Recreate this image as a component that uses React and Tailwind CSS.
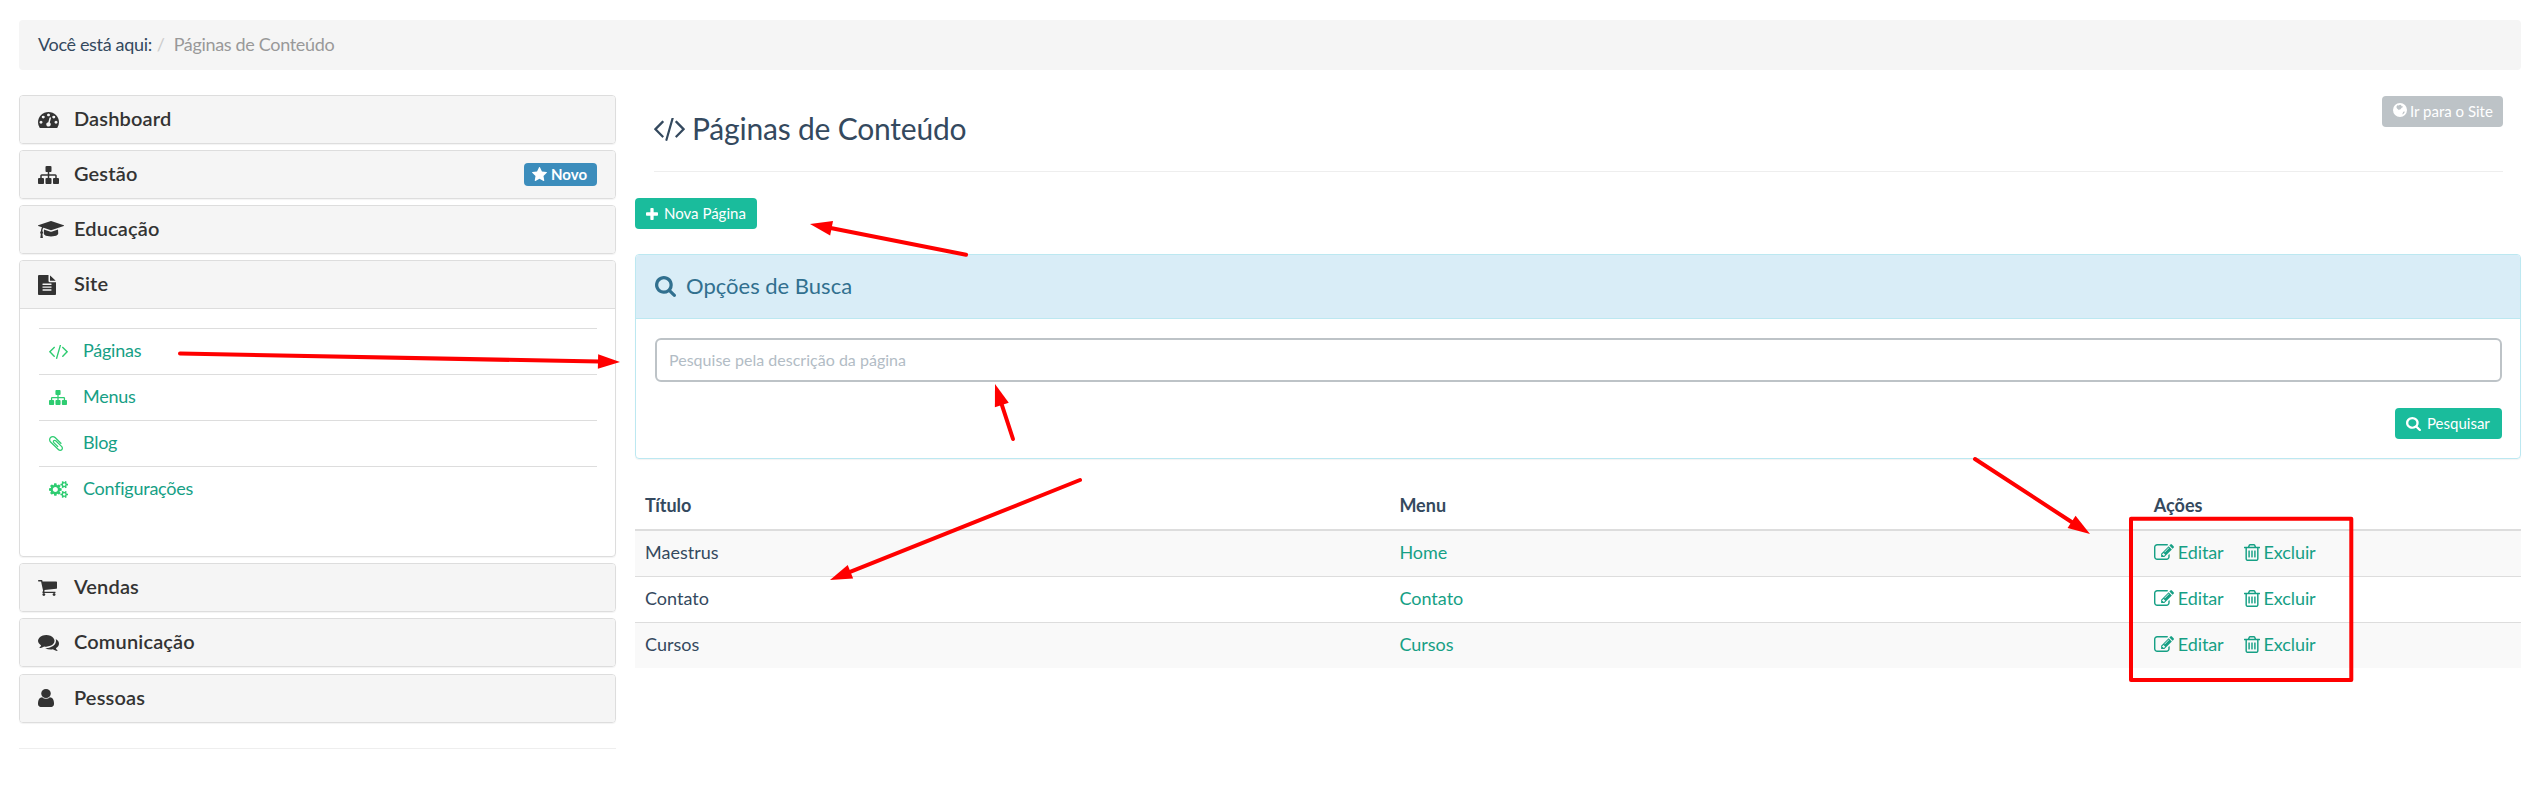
const P = {
  search: ["64 128 1664 1664", "M1216 832q0-185-131.5-316.5t-316.5-131.5-316.5 131.5-131.5 316.5 131.5 316.5 316.5 131.5 316.5-131.5 131.5-316.5zm512 832q0 52-38 90t-90 38q-54 0-90-38l-343-342q-179 124-399 124-143 0-273.5-55.5t-225-150-150-225-55.5-273.5 55.5-273.5 150-225 225-150 273.5-55.5 273.5 55.5 225 150 150 225 55.5 273.5q0 220-124 399l343 343q37 37 37 90z"],
  plus: ["192 128 1408 1408", "M1600 736v192q0 40-28 68t-68 28h-416v416q0 40-28 68t-68 28h-192q-40 0-68-28t-28-68v-416h-416q-40 0-68-28t-28-68v-192q0-40 28-68t68-28h416v-416q0-40 28-68t68-28h192q40 0 68 28t28 68v416h416q40 0 68 28t28 68z"],
  code: ["-19 310 1830 1340", "M553 1399l-50 50q-10 10-23 10t-23-10l-466-466q-10-10-10-23t10-23l466-466q10-10 23-10t23 10l50 50q10 10 10 23t-10 23l-393 393 393 393q10 10 10 23t-10 23zm591-1067l-373 1291q-4 13-15.5 19.5t-23.5 2.5l-62-17q-13-4-19.5-15.5t-2.5-24.5l373-1291q4-13 15.5-19.5t23.5-2.5l62 17q13 4 19.5 15.5t2.5 24.5zm657 651l-466 466q-10 10-23 10t-23-10l-50-50q-10-10-10-23t10-23l393-393-393-393q-10-10-10-23t10-23l50-50q10-10 23-10t23 10l466 466q10 10 10 23t-10 23z"],
  edit: ["0 128 1792 1408", "M888 1184l116-116-152-152-116 116v56h96v96h56zm440-720q-16-16-33 1l-350 350q-17 17-1 33t33-1l350-350q17-17 1-33zm80 594v190q0 119-84.5 203.5t-203.5 84.5h-832q-119 0-203.5-84.5t-84.5-203.5v-832q0-119 84.5-203.5t203.5-84.5h832q63 0 117 25 15 7 18 23 3 17-9 29l-49 49q-14 14-32 8-23-6-45-6h-832q-66 0-113 47t-47 113v832q0 66 47 113t113 47h832q66 0 113-47t47-113v-126q0-13 9-22l64-64q15-15 35-7t20 29zm-96-738l288 288-672 672h-288v-288zm444 132l-92 92-288-288 92-92q28-28 68-28t68 28l152 152q28 28 28 68t-28 68z"],
  trash: ["192 128 1408 1536", "M704 736v576q0 14-9 23t-23 9h-64q-14 0-23-9t-9-23v-576q0-14 9-23t23-9h64q14 0 23 9t9 23zm256 0v576q0 14-9 23t-23 9h-64q-14 0-23-9t-9-23v-576q0-14 9-23t23-9h64q14 0 23 9t9 23zm256 0v576q0 14-9 23t-23 9h-64q-14 0-23-9t-9-23v-576q0-14 9-23t23-9h64q14 0 23 9t9 23zm128 724v-948h-896v948q0 22 7 40.5t14.5 27 10.5 8.5h832q3 0 10.5-8.5t14.5-27 7-40.5zm-672-1076h448l-48-117q-7-9-17-11h-317q-10 2-17 11zm928 32v64q0 14-9 23t-23 9h-96v948q0 83-47 143.5t-113 60.5h-832q-66 0-113-58.5t-47-141.5v-952h-96q-14 0-23-9t-9-23v-64q0-14 9-23t23-9h309l70-167q15-37 54-63t79-26h320q40 0 79 26t54 63l70 167h309q14 0 23 9t9 23z"],
  sitemap: ["0 128 1792 1536", "M1792 1248v320q0 40-28 68t-68 28h-320q-40 0-68-28t-28-68v-320q0-40 28-68t68-28h96v-192h-512v192h96q40 0 68 28t28 68v320q0 40-28 68t-68 28h-320q-40 0-68-28t-28-68v-320q0-40 28-68t68-28h96v-192h-512v192h96q40 0 68 28t28 68v320q0 40-28 68t-68 28h-320q-40 0-68-28t-28-68v-320q0-40 28-68t68-28h96v-192q0-52 38-90t90-38h512v-192h-96q-40 0-68-28t-28-68v-320q0-40 28-68t68-28h320q40 0 68 28t28 68v320q0 40-28 68t-68 28h-96v192h512q52 0 90 38t38 90v192h96q40 0 68 28t28 68z"],
  dash: ["0 256 1792 1408", "M384 1152q0-53-37.5-90.5t-90.5-37.5-90.5 37.5-37.5 90.5 37.5 90.5 90.5 37.5 90.5-37.5 37.5-90.5zm192-448q0-53-37.5-90.5t-90.5-37.5-90.5 37.5-37.5 90.5 37.5 90.5 90.5 37.5 90.5-37.5 37.5-90.5zm428 481l101-382q6-26-7.5-48.5t-38.5-29.5-48 6.5-30 39.5l-101 382q-60 5-107 43.5t-63 98.5q-20 77 20 146t117 89 146-20 89-117q16-60-6-117t-72-91zm660-33q0-53-37.5-90.5t-90.5-37.5-90.5 37.5-37.5 90.5 37.5 90.5 90.5 37.5 90.5-37.5 37.5-90.5zm-640-640q0-53-37.5-90.5t-90.5-37.5-90.5 37.5-37.5 90.5 37.5 90.5 90.5 37.5 90.5-37.5 37.5-90.5zm448 192q0-53-37.5-90.5t-90.5-37.5-90.5 37.5-37.5 90.5 37.5 90.5 90.5 37.5 90.5-37.5 37.5-90.5zm320 448q0 261-141 483-19 29-54 29h-1402q-35 0-54-29-141-221-141-483 0-182 71-348t191-286 286-191 348-71 348 71 286 191 191 286 71 348z"],
  star: ["64 32 1664 1587", "M1728 647q0 22-26 48l-363 354 86 500q1 7 1 20 0 21-10.5 35.5t-30.5 14.5q-19 0-40-12l-449-236-449 236q-22 12-40 12-21 0-31.5-14.5t-10.5-35.5q0-6 2-20l86-500-364-354q-25-27-25-48 0-37 56-46l502-73 225-455q19-41 49-41t49 41l225 455 502 73q56 9 56 46z"],
  user: ["256 128 1280 1536", "M1536 1399q0 109-62.5 187t-150.5 78h-854q-88 0-150.5-78t-62.5-187q0-85 8.5-160.5t31.5-152 58.5-131 94-89 134.5-34.5q131 128 313 128t313-128q76 0 134.5 34.5t94 89 58.5 131 31.5 152 8.5 160.5zm-256-887q0 159-112.5 271.5t-271.5 112.5-271.5-112.5-112.5-271.5 112.5-271.5 271.5-112.5 271.5 112.5 112.5 271.5z"],
  comments: ["0 256 1792 1408", "M1408 768q0 139-94 257t-256.5 186.5-353.5 68.5q-86 0-176-16-124 88-278 128-36 9-86 16h-3q-11 0-20.5-8t-11.5-21q-1-3-1-6.5t.5-6.5 2-6l2.5-5 3.5-5.5 4-5 4.5-5 4-4.5q5-6 23-25t26-29.5 22.5-29 25-38.5 20.5-44q-124-72-195-177t-71-224q0-139 94-257t256.5-186.5 353.5-68.5 353.5 68.5 256.5 186.5 94 257zm384 256q0 120-71 224.5t-195 176.5q10 24 20.5 44t25 38.5 22.5 29 26 29.5 23 25q1 1 4 4.5t4.5 5 4 5 3.5 5.5l2.5 5 2 6 .5 6.5-1 6.5q-3 14-13 22t-22 7q-50-7-86-16-154-40-278-128-90 16-176 16-271 0-472-132 58 4 88 4 161 0 309-45t264-129q125-92 192-212t67-254q0-77-23-152 129 71 204 178t75 230z"],
  cart: ["64 256 1664 1408", "M704 1536q0 52-38 90t-90 38-90-38-38-90 38-90 90-38 90 38 38 90zm896 0q0 52-38 90t-90 38-90-38-38-90 38-90 90-38 90 38 38 90zm128-1088v512q0 24-16.5 42.5t-40.5 21.5l-1044 122q13 60 13 70 0 16-24 64h920q26 0 45 19t19 45-19 45-45 19h-1024q-26 0-45-19t-19-45q0-11 8-31.5t16-36 21.5-40 15.5-29.5l-177-823h-204q-26 0-45-19t-19-45 19-45 45-19h256q16 0 28.5 6.5t19.5 15.5 13 24.5 8 26 5.5 29.5 4.5 26h1201q26 0 45 19t19 45z"],
  grad: ["0 128 2304 1408", "M1774 836l18 316q4 69-82 128t-235 93.5-323 34.5-323-34.5-235-93.5-82-128l18-316 574 181q22 7 48 7t48-7zm530-324q0 23-22 31l-1120 352q-4 1-10 1t-10-1l-652-206q-43 34-71 111.5t-34 178.5q63 36 63 109 0 69-58 107l58 433q2 14-8 25-9 11-24 11h-192q-15 0-24-11-10-11-8-25l58-433q-58-38-58-107 0-73 65-111 11-207 98-330l-333-104q-22-8-22-31t22-31l1120-352q4-1 10-1t10 1l1120 352q22 8 22 31z"],
  file: ["128 0 1536 1792", "M1596 476q14 14 28 36h-472v-472q22 14 36 28zm-476 164h544v1056q0 40-28 68t-68 28h-1344q-40 0-68-28t-28-68v-1600q0-40 28-68t68-28h800v544q0 40 28 68t68 28zm160 736v-64q0-14-9-23t-23-9h-704q-14 0-23 9t-9 23v64q0 14 9 23t23 9h704q14 0 23-9t9-23zm0-256v-64q0-14-9-23t-23-9h-704q-14 0-23 9t-9 23v64q0 14 9 23t23 9h704q14 0 23-9t9-23zm0-256v-64q0-14-9-23t-23-9h-704q-14 0-23 9t-9 23v64q0 14 9 23t23 9h704q14 0 23-9t9-23z"],
  clip: ["196 132 1400 1530", "M1596 1385q0 117-79 196t-196 79q-135 0-235-100l-777-776q-113-115-113-271 0-159 110-270t269-111q158 0 273 113l605 606q10 10 10 22 0 16-30.5 46.5t-46.5 30.5q-13 0-23-10l-606-607q-79-77-181-77-106 0-179 75t-73 181q0 105 76 181l776 777q63 63 145 63 64 0 106-42t42-106q0-82-63-145l-581-581q-26-24-60-24-29 0-48 19t-19 48q0 32 25 59l410 410q10 10 10 22 0 16-31 47t-47 31q-12 0-22-10l-410-410q-63-61-63-149 0-82 57-139t139-57q88 0 149 63l581 581q100 98 100 235z"],
  cogs: ["0 10 1920 1772", "M896 896q0-106-75-181t-181-75-181 75-75 181 75 181 181 75 181-75 75-181zm768 512q0-52-38-90t-90-38-90 38-38 90q0 53 37.5 90.5t90.5 37.5 90.5-37.5 37.5-90.5zm0-1024q0-52-38-90t-90-38-90 38-38 90q0 53 37.5 90.5t90.5 37.5 90.5-37.5 37.5-90.5zm-384 421v185q0 10-7 19.5t-16 10.5l-155 24q-11 35-32 76 34 48 90 115 7 11 7 20 0 12-7 19-23 30-82.5 89.5t-78.5 59.5q-11 0-21-7l-115-90q-37 19-77 31-11 108-23 155-7 24-30 24h-186q-11 0-20-7.5t-10-17.5l-23-153q-34-10-75-31l-118 89q-7 7-20 7-11 0-21-8-144-133-144-160 0-9 7-19 10-14 41-53t47-61q-23-44-35-82l-152-24q-10-1-17-9.5t-7-19.5v-185q0-10 7-19.5t16-10.5l155-24q11-35 32-76-34-48-90-115-7-11-7-20 0-12 7-20 22-30 82-89t79-59q11 0 21 7l115 90q34-18 77-32 11-108 23-154 7-24 30-24h186q11 0 20 7.5t10 17.5l23 153q34 10 75 31l118-89q8-7 20-7 11 0 21 8 144 133 144 160 0 8-7 19-12 16-42 54t-45 60q23 48 34 82l152 23q10 2 17 10.5t7 19.5zm640 533v140q0 16-149 31-12 27-30 52 51 113 51 138 0 4-4 7-122 71-124 71-8 0-46-47t-52-68q-20 2-30 2t-30-2q-14 21-52 68t-46 47q-2 0-124-71-4-3-4-7 0-25 51-138-18-25-30-52-149-15-149-31v-140q0-16 149-31 13-29 30-52-51-113-51-138 0-4 4-7 4-2 35-20t59-34 30-16q8 0 46 46.5t52 67.5q20-2 30-2t30 2q51-71 92-112l6-2q4 0 124 70 4 3 4 7 0 25-51 138 17 23 30 52 149 15 149 31zm0-1024v140q0 16-149 31-12 27-30 52 51 113 51 138 0 4-4 7-122 71-124 71-8 0-46-47t-52-68q-20 2-30 2t-30-2q-14 21-52 68t-46 47q-2 0-124-71-4-3-4-7 0-25 51-138-18-25-30-52-149-15-149-31v-140q0-16 149-31 13-29 30-52-51-113-51-138 0-4 4-7 4-2 35-20t59-34 30-16q8 0 46 46.5t52 67.5q20-2 30-2t30 2q51-71 92-112l6-2q4 0 124 70 4 3 4 7 0 25-51 138 17 23 30 52 149 15 149 31z"],
  globe: ["0 0 14 14", "M7 0a7 7 0 1 0 0 14a7 7 0 1 0 0-14zM4.2 2.2L5.6 2.6L7 1.8L8.4 2.2L8 3.2L9.4 3L9.8 4.2L8.6 4.8L7.6 6.2L6.4 6.6L6 7.2L5 6.2L4 5.6L3.4 4zM10.2 8.8L11.8 8.4L11.4 9.8L10 11.2L9.2 11.2L9.8 10z"],
};

function Icon({ name, className = "" }) {
  const [box, d] = P[name];
  return (
    <svg viewBox={box} preserveAspectRatio="none" fill="currentColor" fillRule={name === "globe" ? "evenodd" : "nonzero"} className={"block shrink-0 " + className} aria-hidden="true">
      <path d={d} />
    </svg>
  );
}

const shell = "rounded border border-[#dddddd] shadow-[0_1px_1px_rgba(0,0,0,0.05)]";

function Heading({ icon, iconClass, label, children }) {
  return (
    <div className="flex h-[47px] items-center bg-[#f5f5f5] pl-[18px] pr-[18px] text-[#333333]">
      <span className="flex w-9 items-center">
        <Icon name={icon} className={iconClass} />
      </span>
      <span className="pb-[3px] text-[20px] font-semibold leading-6 tracking-[0.15px]">{label}</span>
      {children}
    </div>
  );
}

function Panel(props) {
  return (
    <section className={shell + " overflow-hidden"}>
      <Heading {...props} />
    </section>
  );
}

const links = [
  ["code", "w-[19px] h-[14px]", "Páginas"],
  ["sitemap", "w-[18px] h-[15px]", "Menus"],
  ["clip", "w-[14px] h-[15px]", "Blog"],
  ["cogs", "w-[19px] h-[17px]", "Configurações"],
];

const rows = [
  ["Maestrus", "Home"],
  ["Contato", "Contato"],
  ["Cursos", "Cursos"],
];

const arrows = [
  [180, 353.5, 620, 362],
  [966, 254.8, 810, 224],
  [1013, 439, 995, 384],
  [1080, 480, 830, 580],
  [1975, 459, 2090, 534],
];

function Arrow({ from: [x1, y1, x2, y2] }) {
  const len = Math.hypot(x2 - x1, y2 - y1);
  const ux = (x2 - x1) / len;
  const uy = (y2 - y1) / len;
  const bx = x2 - ux * 22;
  const by = y2 - uy * 22;
  const pts = `${x2},${y2} ${bx - uy * 7.3},${by + ux * 7.3} ${bx + uy * 7.3},${by - ux * 7.3}`;
  return (
    <g>
      <line x1={x1} y1={y1} x2={bx + ux} y2={by + uy} stroke="#ff0000" strokeWidth="4" strokeLinecap="round" />
      <polygon points={pts} fill="#ff0000" />
    </g>
  );
}

export default function App() {
  return (
    <div className="relative h-[797px] w-[2533px] overflow-hidden bg-white pl-[19px] pr-3 pt-5 font-['Lato',sans-serif] text-[18px] leading-[29px] text-[#34495e]">
      <nav className="flex h-[50px] items-center rounded bg-[#f5f5f5] pb-[2px] pl-[19px] tracking-[-0.33px]">
        <span>Você está aqui:</span>
        <span className="pl-[5px] text-[#cccccc]">/</span>
        <span className="pl-[9px] text-[#999999]">Páginas de Conteúdo</span>
      </nav>

      <div className="flex gap-[19px] pt-[25px]">
        <aside className="w-[597px] shrink-0">
          <div className="flex flex-col gap-[6px]">
            <Panel icon="dash" iconClass="w-[21px] h-[16px]" label="Dashboard" />
            <Panel icon="sitemap" iconClass="w-[21px] h-[18px]" label="Gestão">
              <span className="ml-auto flex h-[23px] w-[73px] items-center gap-1 rounded bg-[#3c8dbc] pb-px pl-2 text-[15px] font-bold leading-none text-white">
                <Icon name="star" className="w-[15px] h-[14px]" />
                Novo
              </span>
            </Panel>
            <Panel icon="grad" iconClass="w-[26px] h-[17px]" label="Educação" />
            <section className={shell + " h-[297px] overflow-hidden"}>
              <Heading icon="file" iconClass="w-[18px] h-[20px]" label="Site" />
              <div className="border-t border-[#dddddd] pl-[19px] pr-[18px] pt-[19px]">
                {links.map(([icon, cls, label]) => (
                  <a key={label} className="flex h-[46px] items-center border-t border-[#dddddd] pl-[10px] tracking-[-0.25px] text-[#16a085]">
                    <span className="flex w-[34px] items-center text-[#2ecc71]">
                      <Icon name={icon} className={cls} />
                    </span>
                    <span className="pb-[2px]">{label}</span>
                  </a>
                ))}
              </div>
            </section>
            <Panel icon="cart" iconClass="w-[19px] h-[16px]" label="Vendas" />
            <Panel icon="comments" iconClass="w-[21px] h-[16px]" label="Comunicação" />
            <div className="pt-px">
              <Panel icon="user" iconClass="w-[16px] h-[18px] mb-[2px]" label="Pessoas" />
            </div>
          </div>
          <hr className="mt-[25px] border-t border-[#eeeeee]" />
        </aside>

        <main className="w-[1886px] shrink-0">
          <header className="ml-[19px] mr-[18px] flex h-[77px] items-start justify-between border-b border-[#eeeeee]">
            <h1 className="flex items-center gap-[7px] pt-[15px] text-[30px] leading-[36px] tracking-[-0.2px]">
              <Icon name="code" className="mt-[2px] h-[23px] w-[31px]" />
              Páginas de Conteúdo
            </h1>
            <button className="mt-px flex h-[31px] w-[121px] items-center gap-[3px] rounded bg-[#bdc3c7] pl-[11px] text-[15px] leading-none text-white">
              <Icon name="globe" className="mb-[3px] h-[14px] w-[14px]" />
              Ir para o Site
            </button>
          </header>

          <button className="mt-[26px] flex h-[31px] w-[122px] items-center gap-[6px] rounded bg-[#1abc9c] pl-[11px] text-[15px] leading-none text-white">
            <Icon name="plus" className="h-3 w-3" />
            Nova Página
          </button>

          <section className="mt-[25px] h-[205px] overflow-hidden rounded border border-[#bce8f1] shadow-[0_1px_1px_rgba(0,0,0,0.05)]">
            <h2 className="flex h-16 items-center gap-[10px] border-b border-[#bce8f1] bg-[#d9edf7] pl-[19px] text-[22px] leading-7 text-[#31708f]">
              <Icon name="search" className="h-[21px] w-[21px]" />
              <span className="pb-[2px]">Opções de Busca</span>
            </h2>
            <div className="pl-[19px] pr-[18px] pt-[19px]">
              <div className="flex h-11 items-center rounded-md border-2 border-[#bdc3c7] pb-px pl-[12px] text-[16px] tracking-[0.02px] text-[#b2bcc5]">
                Pesquise pela descrição da página
              </div>
              <button className="ml-auto mt-[26px] flex h-[31px] w-[107px] items-center gap-[6px] rounded bg-[#1abc9c] pl-[11px] text-[15px] leading-none text-white">
                <Icon name="search" className="h-[14px] w-[15px]" />
                Pesquisar
              </button>
            </div>
          </section>

          <table className="mt-[23px] w-full table-fixed border-separate border-spacing-0 text-left">
            <thead>
              <tr className="h-[49px]">
                <th className="w-[40%] border-b-2 border-[#dddddd] pl-[10px] font-bold">Título</th>
                <th className="w-[40%] border-b-2 border-[#dddddd] pl-[10px] font-bold">Menu</th>
                <th className="w-[20%] border-b-2 border-[#dddddd] pl-[10px] font-bold">Ações</th>
              </tr>
            </thead>
            <tbody>
              {rows.map(([title, menu], i) => (
                <tr key={title} className={(i % 2 ? "bg-white" : "bg-[#f9f9f9]") + (i ? " h-[46px] [&>td]:border-t [&>td]:border-[#dddddd]" : " h-[45px]")}>
                  <td className="pb-[2px] pl-[10px]">{title}</td>
                  <td className="pb-[2px] pl-[10px] text-[#16a085]">{menu}</td>
                  <td className="pb-[2px] pl-[10px] text-[#16a085]">
                    <div className="flex items-center tracking-[-0.1px]">
                      <Icon name="edit" className="mb-[2px] mr-1 h-4 w-[20px]" />
                      Editar
                      <Icon name="trash" className="ml-5 mr-1 h-[17px] w-4" />
                      Excluir
                    </div>
                  </td>
                </tr>
              ))}
            </tbody>
          </table>
        </main>
      </div>

      <svg className="pointer-events-none absolute left-0 top-0" width="2533" height="797" viewBox="0 0 2533 797">
        {arrows.map((a) => (
          <Arrow key={a[0]} from={a} />
        ))}
        <rect x="2131" y="518.7" width="220.3" height="161.3" fill="none" stroke="#ff0000" strokeWidth="4" strokeLinejoin="round" />
      </svg>
    </div>
  );
}
